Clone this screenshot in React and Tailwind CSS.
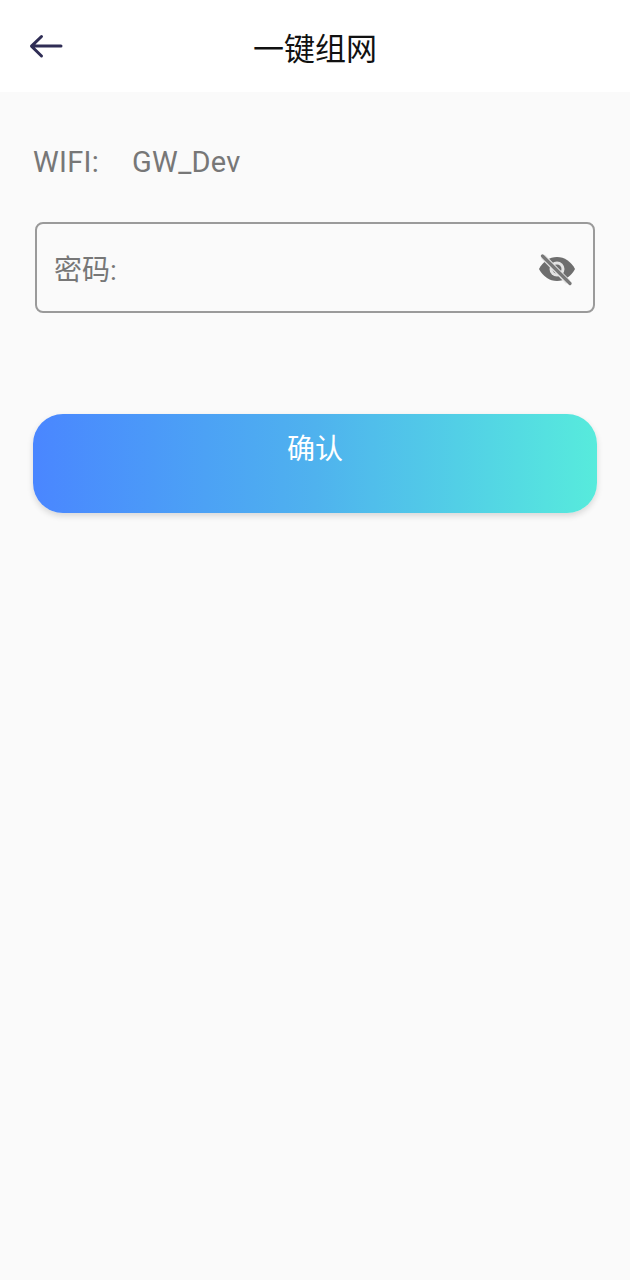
import React from "react";

const FONT = "font-['Roboto','Noto_Sans_CJK_SC',sans-serif]";

export default function App() {
  return (
    <div className={`flex flex-col w-[630px] h-[1280px] bg-[#fafafa] ${FONT}`}>
      {/* Header */}
      <div className="relative flex items-center justify-center h-[92px] bg-white shrink-0">
        <svg className="absolute left-[28px] top-[30px]" width="36" height="32" viewBox="0 0 36 32" fill="none">
          <path d="M33 16H4.5M13.5 6.5L3.5 16.2L13.5 26" stroke="#2f2d55" strokeWidth="3" strokeLinecap="round" strokeLinejoin="round" />
        </svg>
        <span className="text-[31px] leading-none text-[#111111] mt-[6px]">一键组网</span>
      </div>

      {/* Form */}
      <div className="flex flex-col px-[33px]">
        <div className="flex items-center h-[40px] mt-[51px] text-[29px] text-[#777777] tracking-[0.3px]">
          <span>WIFI:</span>
          <span className="ml-[33px]">GW_Dev</span>
        </div>

        <div className="flex items-center justify-between h-[91px] mt-[39px] mx-[2px] pl-[17px] pr-[16px] border-2 border-[#9a9a9a] rounded-[8px]">
          <span className="text-[28px] text-[#777777] mt-[6px]">密码:</span>
          <svg className="mt-[3px]" width="40" height="40" viewBox="0 0 40 40">
            <path d="M2 20C6 12.5 12.5 8 20 8s14 4.5 18 12c-4 7.5-10.5 12-18 12S6 27.5 2 20z" fill="#6e6e6e" />
            <circle cx="20" cy="20" r="7.5" fill="#e4e4e4" />
            <circle cx="20" cy="20" r="4.5" fill="#6e6e6e" />
            <path d="M6 7.5L31 33" stroke="#e4e4e4" strokeWidth="5.5" />
            <path d="M5.5 7L33 34.5" stroke="#787878" strokeWidth="3.2" strokeLinecap="round" />
          </svg>
        </div>

        <button className="flex justify-center h-[99px] mt-[101px] pt-[17px] rounded-[30px] bg-gradient-to-r from-[#4a86ff] via-[#4fb2ee] to-[#57ebdc] shadow-[0_3px_6px_rgba(0,0,0,0.14)] text-[28px] leading-[38px] text-white">
          确认
        </button>
      </div>
    </div>
  );
}
